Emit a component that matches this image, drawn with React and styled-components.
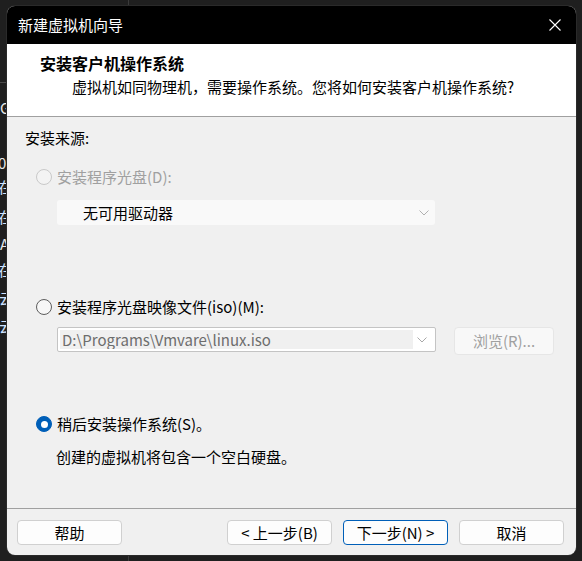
import React from "react";
import styled, { createGlobalStyle } from "styled-components";

const GlobalStyle = createGlobalStyle`
  html, body {
    margin: 0;
    padding: 0;
    background: #1f1f1f;
  }
  body {
    font-family: "Noto Sans CJK SC", "Microsoft YaHei", "Noto Sans", sans-serif;
    font-size: 15px;
    color: #000;
  }
`;

const Desktop = styled.div`
  position: relative;
  width: 582px;
  height: 561px;
  overflow: hidden;
  background: #1f1f1f;
`;

const BackWindow = styled.div`
  position: absolute;
  left: 0;
  top: 0;
  width: 128px;
  height: 561px;
  border-right: 1px solid #3a3a3a;
`;

const BackLine = styled.div`
  position: absolute;
  left: ${p => p.$left}px;
  top: ${p => p.$top}px;
  color: ${p => p.$color || "#e8e8e8"};
  font-size: 15px;
  line-height: 20px;
  white-space: nowrap;
`;

const BackRule = styled.div`
  position: absolute;
  left: 0;
  top: 82px;
  width: 128px;
  height: 1px;
  background: #4a4a4a;
`;

const Dialog = styled.div`
  position: absolute;
  left: 7px;
  top: 6px;
  width: 569px;
  height: 549px;
  border-radius: 8px;
  overflow: hidden;
  background: #f0f0f0;
  display: flex;
  flex-direction: column;
  box-shadow: 0 0 0 1px #2a2a2a;
`;

const TitleBar = styled.div`
  height: 38px;
  flex: none;
  background: #000;
  color: #fff;
  display: flex;
  align-items: center;
  justify-content: space-between;
  padding: 0 15px 0 11px;
  font-size: 15px;
  line-height: 20px;
`;

const CloseIcon = () => (
  <svg width="12" height="12" viewBox="0 0 12 12">
    <path d="M0.5 0.5 L11.5 11.5 M11.5 0.5 L0.5 11.5" stroke="#fff" strokeWidth="1.1" />
  </svg>
);

const Header = styled.div`
  flex: none;
  background: #fff;
  border-bottom: 1px solid #a0a0a0;
  padding: 9px 0 0 33px;
  box-sizing: border-box;
  height: 73px;
`;

const HeaderTitle = styled.div`
  font-size: 16px;
  font-weight: bold;
  line-height: 20px;
`;

const HeaderText = styled.div`
  margin: 4px 0 0 32px;
  font-size: 15px;
  line-height: 20px;
`;

const Body = styled.div`
  flex: 1;
  padding: 11px 0 0 18px;
  display: flex;
  flex-direction: column;
`;

const Label = styled.div`
  line-height: 20px;
  margin-top: ${p => p.$mt || 0}px;
  margin-left: ${p => p.$ml || 0}px;
  color: ${p => (p.$disabled ? "#a0a0a0" : "#000")};
`;

const RadioRow = styled.label`
  display: flex;
  align-items: center;
  gap: 5px;
  height: 20px;
  margin-top: ${p => p.$mt}px;
  margin-left: 11px;
  line-height: 20px;
  color: ${p => (p.$disabled ? "#a0a0a0" : "#000")};
`;

const RadioDot = styled.span`
  width: 16px;
  height: 16px;
  box-sizing: border-box;
  border-radius: 50%;
  flex: none;
  display: flex;
  align-items: center;
  justify-content: center;
  border: 1px solid ${p => (p.$checked ? "#005fb8" : p.$disabled ? "#c9c9c9" : "#5d5d5d")};
  background: ${p => (p.$checked ? "#005fb8" : p.$disabled ? "#f3f3f3" : "#f7f7f7")};

  &::after {
    content: "";
    display: ${p => (p.$checked ? "block" : "none")};
    width: 7px;
    height: 7px;
    border-radius: 50%;
    background: #fff;
  }
`;

const Chevron = ({ color = "#9a9a9a" }) => (
  <svg width="10" height="6" viewBox="0 0 10 6">
    <path d="M0.5 0.5 L5 5 L9.5 0.5" fill="none" stroke={color} strokeWidth="1" />
  </svg>
);

const DriveSelect = styled.div`
  margin: 13px 0 0 32px;
  width: 378px;
  height: 25px;
  box-sizing: border-box;
  background: #f9f9f9;
  border-radius: 3px;
  display: flex;
  align-items: center;
  justify-content: space-between;
  padding: 0 6px 0 26px;
  line-height: 20px;
`;

const FileRow = styled.div`
  display: flex;
  align-items: flex-start;
  gap: 18px;
  margin: 10px 0 0 32px;
  height: 28px;
`;

const Combo = styled.div`
  width: 379px;
  height: 25px;
  box-sizing: border-box;
  border: 1px solid #c4c4c4;
  border-radius: 2px;
  background: #fff;
  display: flex;
  align-items: center;
  padding: 2px 5px 2px 2px;
`;

const ComboField = styled.div`
  width: 353px;
  height: 100%;
  background: #f0f0f0;
  color: #6d6d6d;
  padding-left: 2px;
  box-sizing: border-box;
  line-height: 19px;
  font-size: 15px;
  white-space: nowrap;
  overflow: hidden;
`;

const ComboArrow = styled.div`
  flex: 1;
  display: flex;
  justify-content: center;
`;

const Button = styled.div`
  width: ${p => p.$w || 105}px;
  height: ${p => p.$h || 25}px;
  box-sizing: border-box;
  border-radius: 4px;
  border: 1px solid ${p => (p.$primary ? "#005fb8" : p.$disabled ? "#e6e6e6" : "#d0d0d0")};
  background: ${p => (p.$disabled ? "#f8f8f8" : "#fdfdfd")};
  color: ${p => (p.$disabled ? "#a0a0a0" : "#000")};
  display: flex;
  align-items: center;
  justify-content: center;
  line-height: 20px;
  white-space: nowrap;
`;

const Footer = styled.div`
  flex: none;
  border-top: 1px solid #a0a0a0;
  padding: 11px 0 10px 10px;
  display: flex;
  align-items: center;
`;

const FooterGap = styled.div`
  width: ${p => p.$w}px;
  flex: none;
`;

const backLines = [
  { top: 98, left: 0, text: "GPU", color: "#e8e8e8" },
  { top: 153, left: -2, text: "0(1)", color: "#e8e8e8" },
  { top: 177, left: -2, text: "在线", color: "#cfe3ff" },
  { top: 207, left: -2, text: "在线", color: "#cfe3ff" },
  { top: 234, left: 0, text: "AMD", color: "#e8e8e8" },
  { top: 260, left: -2, text: "在线", color: "#cfe3ff" },
  { top: 288, left: -1, text: "云端", color: "#cfe3ff" },
  { top: 316, left: -1, text: "云端", color: "#cfe3ff" },
];

export default function App() {
  return (
    <>
      <GlobalStyle />
      <Desktop>
        <BackWindow>
          <BackRule />
          {backLines.map((l, i) => (
            <BackLine key={i} $top={l.top} $left={l.left} $color={l.color}>
              {l.text}
            </BackLine>
          ))}
        </BackWindow>

        <Dialog>
          <TitleBar>
            <span>新建虚拟机向导</span>
            <CloseIcon />
          </TitleBar>

          <Header>
            <HeaderTitle>安装客户机操作系统</HeaderTitle>
            <HeaderText>虚拟机如同物理机，需要操作系统。您将如何安装客户机操作系统?</HeaderText>
          </Header>

          <Body>
            <Label>安装来源:</Label>

            <RadioRow $mt={19} $disabled>
              <RadioDot $disabled />
              安装程序光盘(D):
            </RadioRow>
            <DriveSelect>
              <span>无可用驱动器</span>
              <Chevron color="#b0b0b0" />
            </DriveSelect>

            <RadioRow $mt={72}>
              <RadioDot />
              安装程序光盘映像文件(iso)(M):
            </RadioRow>
            <FileRow>
              <Combo>
                <ComboField>D:\Programs\Vmvare\linux.iso</ComboField>
                <ComboArrow>
                  <Chevron color="#a8a8a8" />
                </ComboArrow>
              </Combo>
              <Button $w={100} $h={28} $disabled>
                浏览(R)...
              </Button>
            </FileRow>

            <RadioRow $mt={59}>
              <RadioDot $checked />
              稍后安装操作系统(S)。
            </RadioRow>
            <Label $mt={13} $ml={31}>
              创建的虚拟机将包含一个空白硬盘。
            </Label>
          </Body>

          <Footer>
            <Button>帮助</Button>
            <FooterGap $w={105} />
            <Button>&lt; 上一步(B)</Button>
            <FooterGap $w={11} />
            <Button $primary>下一步(N) &gt;</Button>
            <FooterGap $w={11} />
            <Button>取消</Button>
          </Footer>
        </Dialog>
      </Desktop>
    </>
  );
}
